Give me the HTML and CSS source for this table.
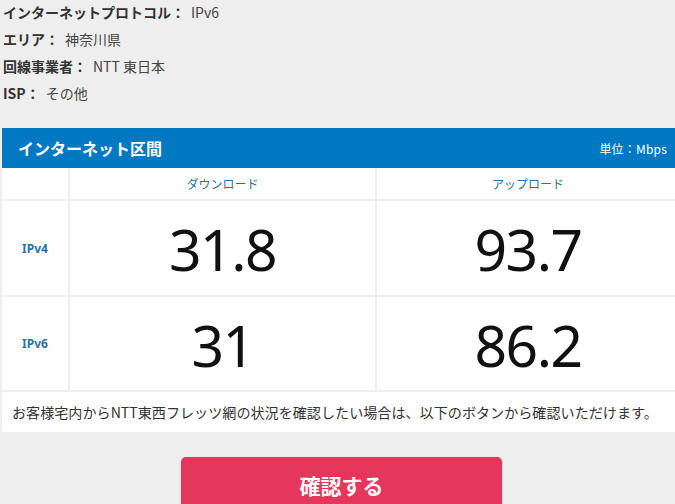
FILE: index.html
```html
<!DOCTYPE html>
<html lang="ja">
<head>
<meta charset="utf-8">
<link rel="stylesheet" href="styles.css">
</head>
<body>
<div class="info">
  <div class="info-row"><span class="lbl">インターネットプロトコル：</span><span class="val">IPv6</span></div>
  <div class="info-row"><span class="lbl">エリア：</span><span class="val">神奈川県</span></div>
  <div class="info-row"><span class="lbl">回線事業者：</span><span class="val">NTT 東日本</span></div>
  <div class="info-row"><span class="lbl">ISP：</span><span class="val">その他</span></div>
</div>
<section class="panel">
  <div class="panel-head">
    <h2 class="panel-title">インターネット区間</h2>
    <span class="unit">単位：Mbps</span>
  </div>
  <div class="grid">
    <div class="cell"></div>
    <div class="cell colhead">ダウンロード</div>
    <div class="cell colhead">アップロード</div>
    <div class="cell rowhead big-row">IPv4</div>
    <div class="cell num big-row">31.8</div>
    <div class="cell num big-row">93.7</div>
    <div class="cell rowhead big-row">IPv6</div>
    <div class="cell num big-row">31</div>
    <div class="cell num big-row">86.2</div>
    <div class="cell note">お客様宅内からNTT東西フレッツ網の状況を確認したい場合は、以下のボタンから確認いただけます。</div>
  </div>
</section>
<div class="btn-wrap">
  <a class="btn">確認する</a>
</div>
</body>
</html>
```

FILE: styles.css
```css
html, body {
  margin: 0;
  padding: 0;
  overflow: hidden;
}
body {
  background: #eeeeee;
  font-family: "Noto Sans CJK JP", "Noto Sans", sans-serif;
  color: #333;
  width: 675px;
  height: 504px;
}
.info {
  margin-top: -1px;
  padding-left: 3px;
}
.info-row {
  height: 27px;
  line-height: 27px;
  font-size: 14px;
  white-space: nowrap;
}
.lbl {
  font-weight: bold;
  color: #333;
}
.val {
  color: #444;
  margin-left: 6px;
}
.panel {
  margin: 21px 0 0 2px;
  width: 677px;
}
.panel-head {
  background: #0079c2;
  height: 40px;
  display: flex;
  align-items: center;
  justify-content: space-between;
  padding: 0 12px 0 16px;
  color: #fff;
}
.panel-title {
  margin: 0;
  font-size: 16px;
  font-weight: bold;
}
.unit {
  font-size: 12px;
  letter-spacing: 0.2px;
}
.grid {
  display: grid;
  grid-template-columns: 66px 305px 302px;
  grid-template-rows: 31px 94px 93px 40px;
  gap: 2px;
  background: #eeeeee;
  padding-bottom: 2px;
}
.cell {
  background: #fff;
  display: flex;
  align-items: center;
  justify-content: center;
}
.colhead {
  font-size: 12px;
  color: #2a6f9e;
}
.rowhead {
  font-size: 12px;
  font-weight: bold;
  color: #2a73a8;
  font-family: "Noto Sans", sans-serif;
}
.num {
  font-family: "Noto Sans", sans-serif;
  font-size: 57px;
  letter-spacing: -1.5px;
  color: #111;
  padding-top: 2px;
}
.note {
  grid-column: 1 / 4;
  justify-content: flex-start;
  padding-left: 10px;
  font-size: 14.1px;
  color: #333;
  white-space: nowrap;
}
.btn-wrap {
  display: flex;
  justify-content: center;
  padding-left: 8px;
  margin-top: 23px;
}
.btn {
  width: 321px;
  height: 56px;
  background: #e4375b;
  border-radius: 5px;
  box-shadow: 0 1px 3px rgba(0,0,0,0.18);
  color: #fff;
  font-size: 21px;
  font-weight: bold;
  display: flex;
  align-items: center;
  justify-content: center;
}
```
